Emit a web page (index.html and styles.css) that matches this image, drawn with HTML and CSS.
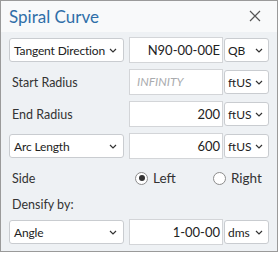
FILE: index.html
```html
<!DOCTYPE html>
<html lang="en">
<head>
<meta charset="UTF-8" />
<title>Spiral Curve</title>
<link rel="stylesheet" href="styles.css">
</head>
<body>

<div class="dialog">
  <div class="titlebar">
    <span class="title">Spiral Curve</span>
    <svg class="close" width="12" height="12" viewBox="0 0 12 12"><path d="M1 1L11 11M11 1L1 11" stroke="#555" stroke-width="1.2" fill="none"/></svg>
  </div>

  <div class="content">
    <div class="row">
      <div class="select wide"><span>Tangent Direction</span><svg class="chev" width="8" height="5" viewBox="0 0 8 5"><path d="M1 1l3 3 3-3" stroke="#333" stroke-width="1.2" fill="none"/></svg></div>
      <div class="field">N90-00-00E</div>
      <div class="select unit"><span>QB</span><svg class="chev" width="8" height="5" viewBox="0 0 8 5"><path d="M1 1l3 3 3-3" stroke="#333" stroke-width="1.2" fill="none"/></svg></div>
    </div>

    <div class="row">
      <div class="label">Start Radius</div>
      <div class="field placeholder">INFINITY</div>
      <div class="select unit"><span>ftUS</span><svg class="chev" width="8" height="5" viewBox="0 0 8 5"><path d="M1 1l3 3 3-3" stroke="#333" stroke-width="1.2" fill="none"/></svg></div>
    </div>

    <div class="row">
      <div class="label">End Radius</div>
      <div class="field">200</div>
      <div class="select unit"><span>ftUS</span><svg class="chev" width="8" height="5" viewBox="0 0 8 5"><path d="M1 1l3 3 3-3" stroke="#333" stroke-width="1.2" fill="none"/></svg></div>
    </div>

    <div class="row">
      <div class="select wide"><span>Arc Length</span><svg class="chev" width="8" height="5" viewBox="0 0 8 5"><path d="M1 1l3 3 3-3" stroke="#333" stroke-width="1.2" fill="none"/></svg></div>
      <div class="field">600</div>
      <div class="select unit"><span>ftUS</span><svg class="chev" width="8" height="5" viewBox="0 0 8 5"><path d="M1 1l3 3 3-3" stroke="#333" stroke-width="1.2" fill="none"/></svg></div>
    </div>

    <div class="row side">
      <div class="label">Side</div>
      <div class="radio"><span class="dot checked"></span>Left</div>
      <div class="radio"><span class="dot"></span>Right</div>
    </div>

    <div class="caption">Densify by:</div>

    <div class="row">
      <div class="select wide"><span>Angle</span><svg class="chev" width="8" height="5" viewBox="0 0 8 5"><path d="M1 1l3 3 3-3" stroke="#333" stroke-width="1.2" fill="none"/></svg></div>
      <div class="field">1-00-00</div>
      <div class="select unit"><span>dms</span><svg class="chev" width="8" height="5" viewBox="0 0 8 5"><path d="M1 1l3 3 3-3" stroke="#333" stroke-width="1.2" fill="none"/></svg></div>
    </div>
  </div>
</div>

</body>
</html>
```

FILE: styles.css
```css
body {
  margin: 0;
  background: #ffffff;
  font-family: 'Lato', 'Noto Sans', sans-serif;
  font-size: 12.5px;
  color: #222;
}

.dialog {
  width: 276px;
  height: 250px;
  border: 1px solid #9a9a9a;
  background: #eef1f4;
}

.titlebar {
  height: 31px;
  background: #f8f9fa;
  display: flex;
  align-items: center;
  justify-content: space-between;
  padding: 0 16px 0 8px;
}
.title {
  font-size: 17px;
  color: #2f6ea8;
}
.close { margin-top: -2px; }

.content {
  padding: 5px 8px 0 8px;
}

.row {
  display: flex;
  align-items: center;
  height: 26px;
  margin-bottom: 6px;
  white-space: nowrap;
}
.row > div { flex: none; }

.select {
  height: 24px;
  box-sizing: border-box;
  border: 1px solid #c9ccd0;
  border-radius: 3px;
  background: #fff;
  display: flex;
  align-items: center;
  justify-content: space-between;
  padding: 0 6px 0 4px;
  font-size: 12px;
}
.select.wide { width: 115px; margin-right: 5px; letter-spacing: -0.15px; }
.select.unit { width: 45px; margin-left: 1px; padding: 0 5px 0 3px; }
.chev { flex: none; }

.field {
  width: 94px;
  height: 26px;
  box-sizing: border-box;
  border: 1px solid #d3d5d8;
  background: #fff;
  text-align: right;
  line-height: 24px;
  padding-right: 2px;
  font-size: 13px;
}
.field.placeholder {
  text-align: left;
  padding-left: 7px;
  color: #a9abae;
  font-style: italic;
  font-size: 12px;
}

.label {
  width: 113px;
  margin-right: 4px;
  padding-left: 3px;
  color: #333;
}

.side { margin-top: 2px; }
.side .label { width: 119px; }
.radio {
  display: flex;
  align-items: center;
  width: 78px;
  color: #333;
  font-size: 13.5px;
}
.dot {
  width: 13px;
  height: 13px;
  border: 1px solid #8c8c8c;
  border-radius: 50%;
  background: #fff;
  margin-right: 5px;
  box-sizing: border-box;
  position: relative;
}
.dot.checked::after {
  content: "";
  position: absolute;
  left: 2.5px;
  top: 2.5px;
  width: 6px;
  height: 6px;
  border-radius: 50%;
  background: #333;
}

.caption {
  padding-left: 3px;
  color: #333;
  margin: 6px 0 7px;
}
```
